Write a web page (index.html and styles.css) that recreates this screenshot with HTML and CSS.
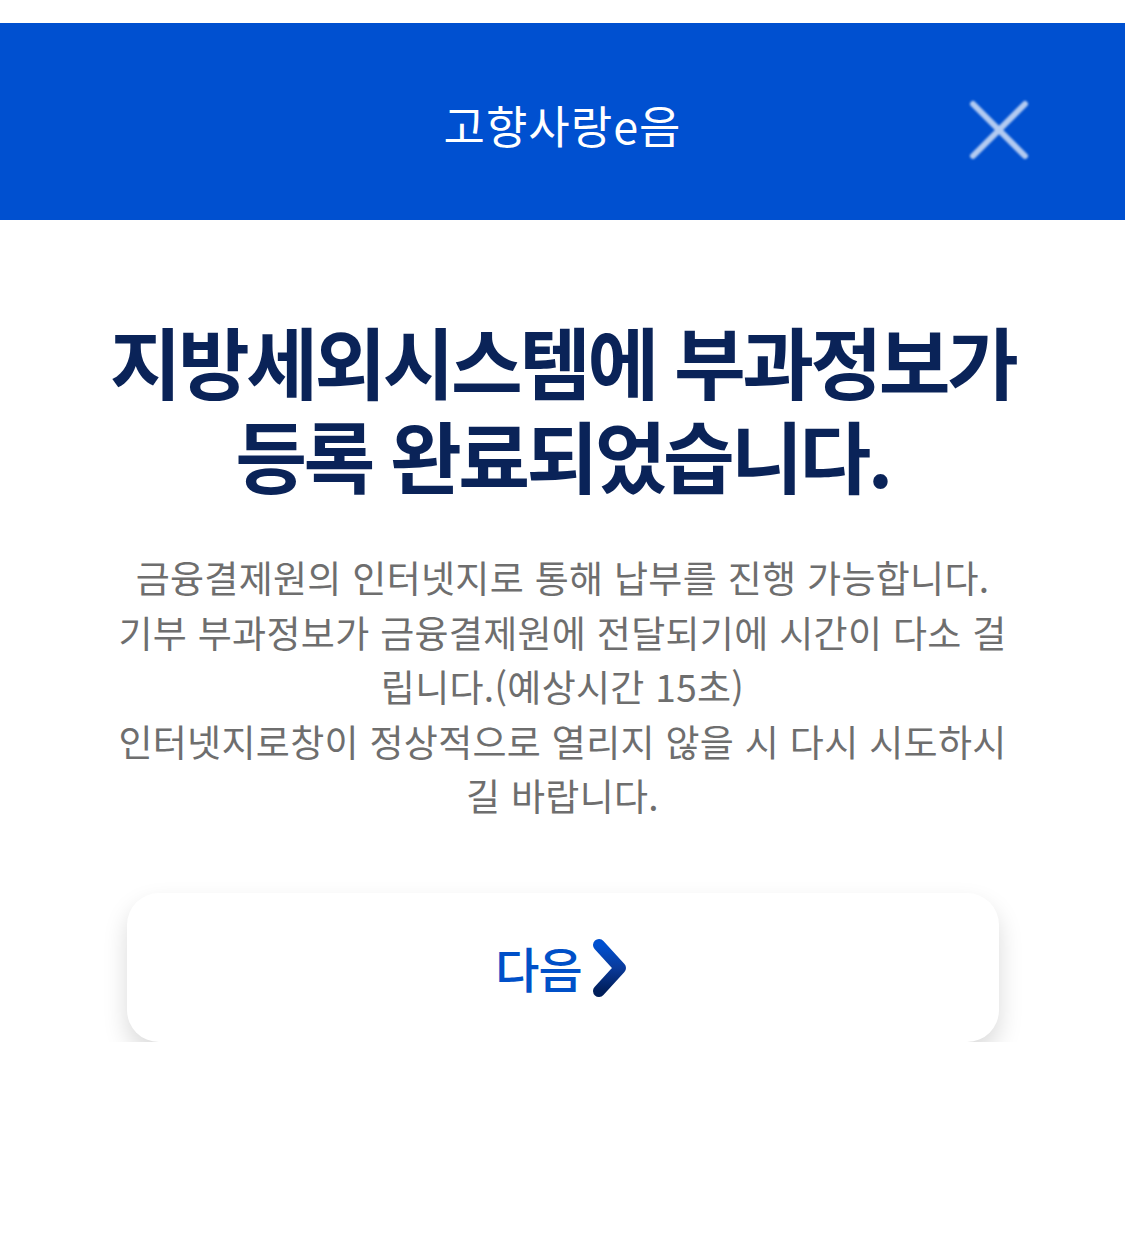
FILE: index.html
```html
<!DOCTYPE html>
<html lang="ko">

<head>
  <meta charset="UTF-8" />
  <meta name="viewport" content="width=device-width, initial-scale=1.0" />
  <title>고향사랑e음</title>
  <link rel="stylesheet" href="styles.css">
</head>

<body>
  <div class="status"></div>
  <div class="header">
    <span></span>
    <h1 class="title">고향사랑e음</h1>
    <a href="#" class="close">
      <svg width="64" height="64" viewBox="0 0 64 64">
        <path d="M6 6 L58 58 M58 6 L6 58" stroke="#fff" stroke-width="6" stroke-linecap="round" fill="none" />
      </svg>
    </a>
  </div>

  <div class="content">
    <h2 class="done">
      <span>지방세외시스템에 부과정보가</span>
      <span>등록 완료되었습니다.</span>
    </h2>
    <p class="desc">
      금융결제원의 인터넷지로 통해 납부를 진행 가능합니다.<br>
      기부 부과정보가 금융결제원에 전달되기에 시간이 다소 걸<br>립니다.(예상시간 15초)<br>
      인터넷지로창이 정상적으로 열리지 않을 시 다시 시도하시<br>길 바랍니다.
    </p>
    <a href="#" class="next">
      <span>다음</span>
      <svg width="40" height="60" viewBox="0 0 40 60">
        <defs>
          <linearGradient id="arrow" x1="0" y1="0" x2="0" y2="1">
            <stop offset="0" stop-color="#0050d0" />
            <stop offset="0.5" stop-color="#0a3a9a" />
            <stop offset="1" stop-color="#001e5a" />
          </linearGradient>
        </defs>
        <path d="M9 8 L30 31 L9 54" stroke="url(#arrow)" stroke-width="12" stroke-linecap="round" stroke-linejoin="round" fill="none" />
      </svg>
    </a>
  </div>
</body>

</html>
```

FILE: styles.css
```css
* {
  margin: 0;
  padding: 0;
}

body {
  background: #fff;
  font-family: "Noto Sans CJK KR", "Noto Sans", sans-serif;
}

a {
  text-decoration: none;
}

.status {
  height: 23px;
}

/* 상단 파란 바 */
.header {
  height: 197px;
  background-color: #0050d0;
  display: grid;
  grid-template-columns: 1fr auto 1fr;
  align-items: center;
}

.header .title {
  font-size: 45px;
  font-weight: 400;
  color: #fff;
  letter-spacing: 1px;
  padding-top: 6px;
}

.header .close {
  justify-self: end;
  margin-right: 94px;
  margin-top: 16px;
  display: flex;
  opacity: .7;
  filter: blur(1px);
}

.content {
  display: flex;
  flex-direction: column;
  align-items: center;
  padding-top: 93px;
}

.done {
  font-size: 78px;
  font-weight: 700;
  color: #0a2358;
  letter-spacing: -3.5px;
  text-align: center;
}

.done span {
  display: block;
  height: 94px;
  line-height: 94px;
}

.desc {
  width: 940px;
  margin-top: 49px;
  font-size: 37px;
  line-height: 54.5px;
  color: #6e6e6e;
  letter-spacing: 0.3px;
  text-align: center;
}

/* 다음 버튼 */
.next {
  width: 872px;
  height: 149px;
  margin-top: 70px;
  border-radius: 32px;
  background: #fff;
  box-shadow: 0 12px 24px rgba(0, 0, 0, .15);
  display: flex;
  justify-content: center;
  align-items: center;
  gap: 8px;
}

.next span {
  font-size: 48px;
  font-weight: 500;
  color: #0050c8;
  letter-spacing: -1px;
}
```
